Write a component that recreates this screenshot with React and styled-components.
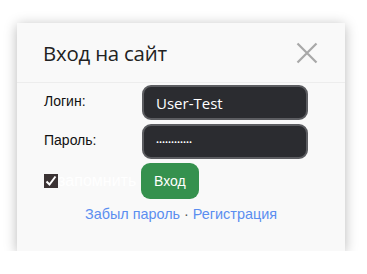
import React from 'react';
import styled, {createGlobalStyle} from 'styled-components';

const Global = createGlobalStyle`
    body {
        margin: 0;
        background: #fff;
        font-family: "Liberation Sans", Arial, sans-serif;
    }
`;

const Page = styled.div`
    padding: 23px 22px 0 17px;
`;

const Card = styled.div`
    width: 328px;
    height: 228px;
    background: #f9f9f9;
    box-shadow: 0 2px 12px rgba(0, 0, 0, 0.28);
    display: flex;
    flex-direction: column;
`;

const Header = styled.div`
    height: 58px;
    border-bottom: 1px solid #ededed;
    display: flex;
    align-items: center;
    justify-content: space-between;
    padding: 1px 27px 0 26px;
`;

const Title = styled.h1`
    margin: 0;
    font-family: "Open Sans", "Noto Sans", sans-serif;
    font-weight: 400;
    font-size: 20.4px;
    color: #222;
    letter-spacing: -0.2px;
`;

const Close = styled.button`
    border: 0;
    background: none;
    padding: 0;
    width: 22px;
    height: 22px;
    display: flex;
    cursor: pointer;
`;

const Body = styled.div`
    padding: 2px 0 0 27px;
    display: flex;
    flex-direction: column;
    gap: 4px;
`;

const Row = styled.div`
    display: flex;
    align-items: ${p => p.$align || 'flex-start'};
`;

const Label = styled.label`
    width: 98px;
    font-size: 14px;
    color: #111;
    padding-top: 8px;
`;

const Input = styled.input`
    box-sizing: border-box;
    width: 166px;
    height: 35px;
    border: 2px solid #5c5d61;
    border-radius: 9px;
    background: #2b2c30;
    color: #fff;
    font-family: "Open Sans", "Noto Sans", sans-serif;
    font-size: ${p => p.$small ? 8 : 15}px;
    padding: 0 12px;
    outline: none;
    caret-color: #000;
`;

const Remember = styled.label`
    width: 98px;
    display: flex;
    align-items: center;
    font-size: 16px;
    color: #fff;
    white-space: nowrap;
`;

const Check = styled.span`
    width: 14px;
    height: 14px;
    background: #3b3334;
    display: inline-flex;
    flex-shrink: 0;
`;

const Submit = styled.button`
    border: 0;
    background: #35914e;
    color: #fff;
    border-radius: 9px;
    height: 36px;
    padding: 0 13px;
    font-family: "Liberation Sans", Arial, sans-serif;
    font-size: 14px;
    margin-left: -1px;
`;

const Links = styled.div`
    text-align: center;
    font-size: 14.4px;
    color: #555;
    margin: 3px 0 0 -27px;
`;

const Link = styled.a`
    color: #5b8ef0;
    text-decoration: none;
`;

export default function App() {
    return (
        <Page>
            <Global/>
            <Card>
                <Header>
                    <Title>Вход на сайт</Title>
                    <Close aria-label="close">
                        <svg width="22" height="22" viewBox="0 0 22 22">
                            <path d="M1.5 1.5 L20.5 20.5 M20.5 1.5 L1.5 20.5" stroke="#a8a8a8" strokeWidth="2.2"/>
                        </svg>
                    </Close>
                </Header>
                <Body>
                    <Row>
                        <Label>Логин:</Label>
                        <Input defaultValue="User-Test"/>
                    </Row>
                    <Row>
                        <Label>Пароль:</Label>
                        <Input $small type="password" defaultValue="123456789012"/>
                    </Row>
                    <Row $align="center">
                        <Remember>
                            <Check>
                                <svg width="14" height="14" viewBox="0 0 14 14">
                                    <path d="M2.5 7.5 L5.5 10.5 L11.5 2.5" stroke="#fff" strokeWidth="2" fill="none"/>
                                </svg>
                            </Check>
                            запомнить
                        </Remember>
                        <Submit>Вход</Submit>
                    </Row>
                    <Links>
                        <Link href="#">Забыл пароль</Link> · <Link href="#">Регистрация</Link>
                    </Links>
                </Body>
            </Card>
        </Page>
    );
}
